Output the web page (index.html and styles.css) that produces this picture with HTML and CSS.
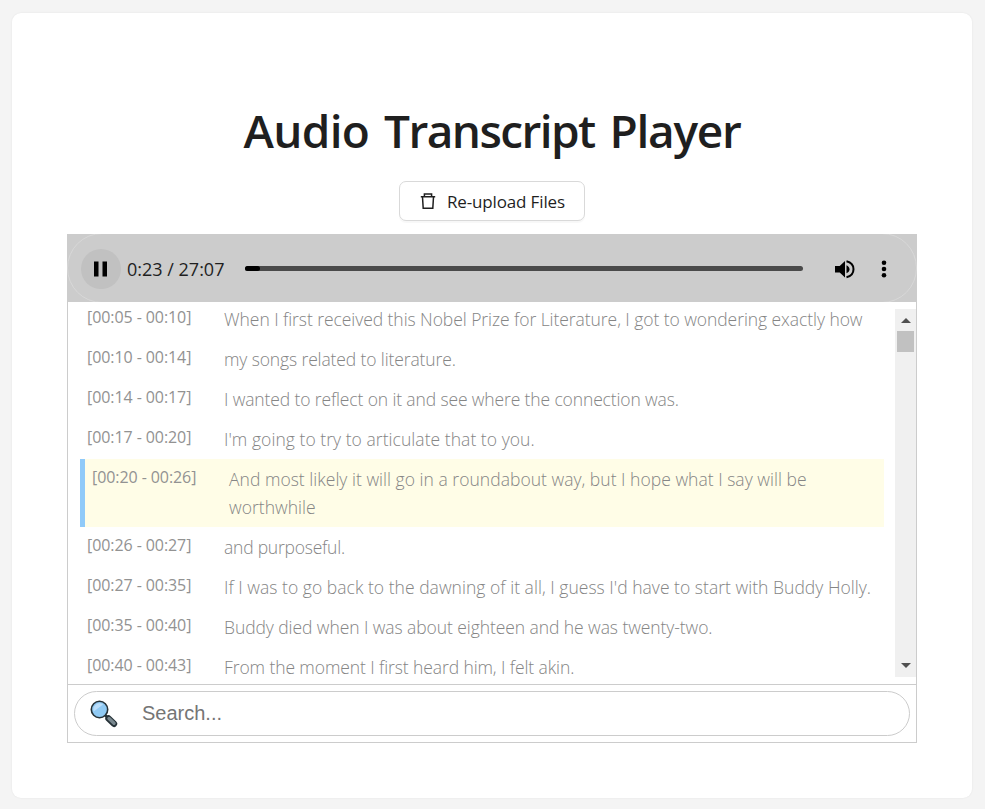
FILE: index.html
```html
<!DOCTYPE html>
<html lang="en">
<head>
<meta charset="utf-8">
<title>Audio Transcript Player</title>
<link rel="stylesheet" href="styles.css">
</head>
<body>
<main class="card">
  <h1 class="title"><span class="w1">Audio</span> <span class="w2">Transcript</span> <span class="w3">Player</span></h1>
  <button class="upload">
    <svg width="18" height="18" viewBox="0 0 18 18" fill="none" stroke="#1f1f1f" stroke-width="1.5"><path d="M1.800 4.800h14.400M5.400 4.500V2h7.200v2.500M3.500 5l.7 11.200h9.600L14.500 5"/></svg>
    <span>Re-upload Files</span>
  </button>
  <section class="panel">
    <div class="player">
      <div class="pill">
        <span class="pause"><svg width="14" height="16" viewBox="0 0 14 16"><path d="M0 .5h4.500v15H0zM8.500 .5H13v15H8.500z"/></svg></span>
        <span class="time">0:23 / 27:07</span>
        <span class="track"><span class="played"></span></span>
        <svg class="volume" width="20" height="20" viewBox="0 0 20 20"><path d="M0 7v6.500h4.700l5.300 5V2L4.700 7z"/><path d="M11.500 6.200c1.800.8 3 2.200 3 4s-1.200 3.200-3 4z"/><path d="M11.500 2.200c4.300 1 7 4 7 8s-2.700 7-7 8" fill="none" stroke="#000" stroke-width="2"/></svg>
        <svg class="more" width="6" height="18" viewBox="0 0 6 18"><circle cx="3" cy="2.700" r="2.300"/><circle cx="3" cy="9" r="2.300"/><circle cx="3" cy="15.300" r="2.300"/></svg>
      </div>
    </div>
    <div class="viewport">
      <div class="rows">
        <div class="row"><span class="stamp">[00:05 - 00:10]</span><p class="l1">When I first received this Nobel Prize for Literature, I got to wondering exactly how</p></div>
        <div class="row"><span class="stamp">[00:10 - 00:14]</span><p class="l2">my songs related to literature.</p></div>
        <div class="row"><span class="stamp">[00:14 - 00:17]</span><p class="l3">I wanted to reflect on it and see where the connection was.</p></div>
        <div class="row"><span class="stamp">[00:17 - 00:20]</span><p class="l4">I'm going to try to articulate that to you.</p></div>
        <div class="row active"><span class="stamp">[00:20 - 00:26]</span><p class="l5">And most likely it will go in a roundabout way, but I hope what I say will be<br>worthwhile</p></div>
        <div class="row"><span class="stamp">[00:26 - 00:27]</span><p class="l6">and purposeful.</p></div>
        <div class="row"><span class="stamp">[00:27 - 00:35]</span><p class="l7">If I was to go back to the dawning of it all, I guess I'd have to start with Buddy Holly.</p></div>
        <div class="row"><span class="stamp">[00:35 - 00:40]</span><p class="l8">Buddy died when I was about eighteen and he was twenty-two.</p></div>
        <div class="row"><span class="stamp">[00:40 - 00:43]</span><p class="l9">From the moment I first heard him, I felt akin.</p></div>
      </div>
      <div class="scrollbar">
        <svg width="10" height="5" viewBox="0 0 10 5"><path d="M0 5 5 0l5 5z"/></svg>
        <span class="thumb"></span>
        <svg class="down" width="10" height="5" viewBox="0 0 10 5"><path d="M0 0l5 5 5-5z"/></svg>
      </div>
    </div>
    <div class="searchbar">
      <label class="search">
        <svg width="28" height="28" viewBox="0 0 28 28"><path d="M15 15l4 4" stroke="#263238" stroke-width="2.500"/><path d="M18.500 18.500l5.500 5.300" stroke="#263238" stroke-width="6.400" stroke-linecap="round"/><path d="M19 18.500l5 4.800" stroke="#78878e" stroke-width="3.400" stroke-linecap="round"/><circle cx="9.500" cy="9.500" r="8.200" fill="#90caf4" stroke="#263238" stroke-width="1.600"/><path d="M3.700 11.500A6.200 6.200 0 0 1 13 4.400z" fill="#bbdefb"/></svg>
        <input type="text" placeholder="Search...">
      </label>
    </div>
  </section>
</main>
</body>
</html>
```
FILE: styles.css
```css
* { box-sizing: border-box; }
body { margin: 0; height: 809px; padding: 13px 13px 11px 12px; background: #f4f4f4; overflow: hidden; font-family: "Open Sans", "Noto Sans", sans-serif; color: #1f1f1f; }
.card { height: 785px; padding: 85px 55px 0; background: #fff; border-radius: 9px; box-shadow: 0 0 2px rgba(0,0,0,.08); display: flex; flex-direction: column; align-items: center; }
.title { margin: 0; height: 83px; line-height: 64px; font-size: 46px; font-weight: 600; white-space: nowrap; word-spacing: 3px; }
.w1 { letter-spacing: -.7px; }
.w2 { letter-spacing: -1.6px; }
.w3 { letter-spacing: -1.3px; }
.upload { flex: none; display: flex; align-items: center; gap: 10px; width: 186px; height: 40px; margin: 0; padding: 0 0 0 19px; background: #fff; border: 1px solid #d9d9d9; border-radius: 7px; box-shadow: 0 2px 1px rgba(0,0,0,.03); font: 400 17px "Open Sans", sans-serif; color: #1f1f1f; letter-spacing: -.15px; white-space: nowrap; }
.panel { flex: none; width: 850px; height: 509px; margin-top: 13px; border: 1px solid #ccc; border-top: 0; }
.player { height: 68px; margin: 0 -1px; background: #ccc; overflow: hidden; }
.pill { height: 70px; margin-top: -1px; padding-top: 1px; border: 1px solid #d8d8d8; border-radius: 35px; display: flex; align-items: center; padding-left: 13px; }
.pause { flex: none; width: 40px; height: 40px; border-radius: 50%; background: #c1c1c1; display: flex; align-items: center; justify-content: center; }
.time { width: 118px; margin-left: 6px; font-size: 18px; letter-spacing: 0; white-space: nowrap; }
.track { width: 558px; height: 5px; border-radius: 3px; background: #4a4a4a; display: flex; }
.played { width: 15px; border-radius: 3px; background: #000; }
.volume { margin-left: 32px; }
.more { margin-left: 26px; }
.viewport { height: 382px; padding: 7px 0 7px 12px; display: flex; justify-content: space-between; }
.rows { width: 804px; height: 368px; display: flex; flex-direction: column; }
.row { flex: none; height: 40px; padding: 6px 7px; display: flex; }
.row:first-child { margin-top: -10px; }
.active { height: 68px; background: #fffde7; border-left: 5px solid #90caf9; }
.stamp { flex: none; width: 137px; font-size: 16px; line-height: 24px; color: #929292; letter-spacing: -.08px; white-space: nowrap; }
.row p { margin: 0; font-size: 17.5px; font-weight: 300; line-height: 28px; color: #858585; white-space: nowrap; }
.row .l1 { letter-spacing: -.06px; }
.row .l2 { letter-spacing: -.125px; }
.row .l3 { letter-spacing: -.13px; }
.row .l4 { letter-spacing: .045px; }
.row .l5 { letter-spacing: .025px; }
.row .l6 { letter-spacing: -.23px; }
.row .l7 { letter-spacing: .03px; }
.row .l8 { letter-spacing: -.075px; }
.row .l9 { letter-spacing: -.095px; }
.scrollbar { width: 21px; height: 368px; background: #f0f0f0; display: flex; flex-direction: column; align-items: center; padding: 9px 0 9px; fill: #505050; }
.thumb { width: 17px; height: 21px; margin-top: 8px; background: #c1c1c1; }
.down { margin-top: auto; }
.searchbar { height: 58px; padding: 6px; border-top: 1px solid #ccc; }
.search { height: 45px; border: 1px solid #ccc; border-radius: 23px; display: flex; align-items: center; padding-left: 15px; gap: 24px; }
.search input { width: 700px; border: 0; padding: 0; outline: 0; background: none; font: 20px "Liberation Sans", Arial, sans-serif; }
.search input::placeholder { color: #757575; }
```
